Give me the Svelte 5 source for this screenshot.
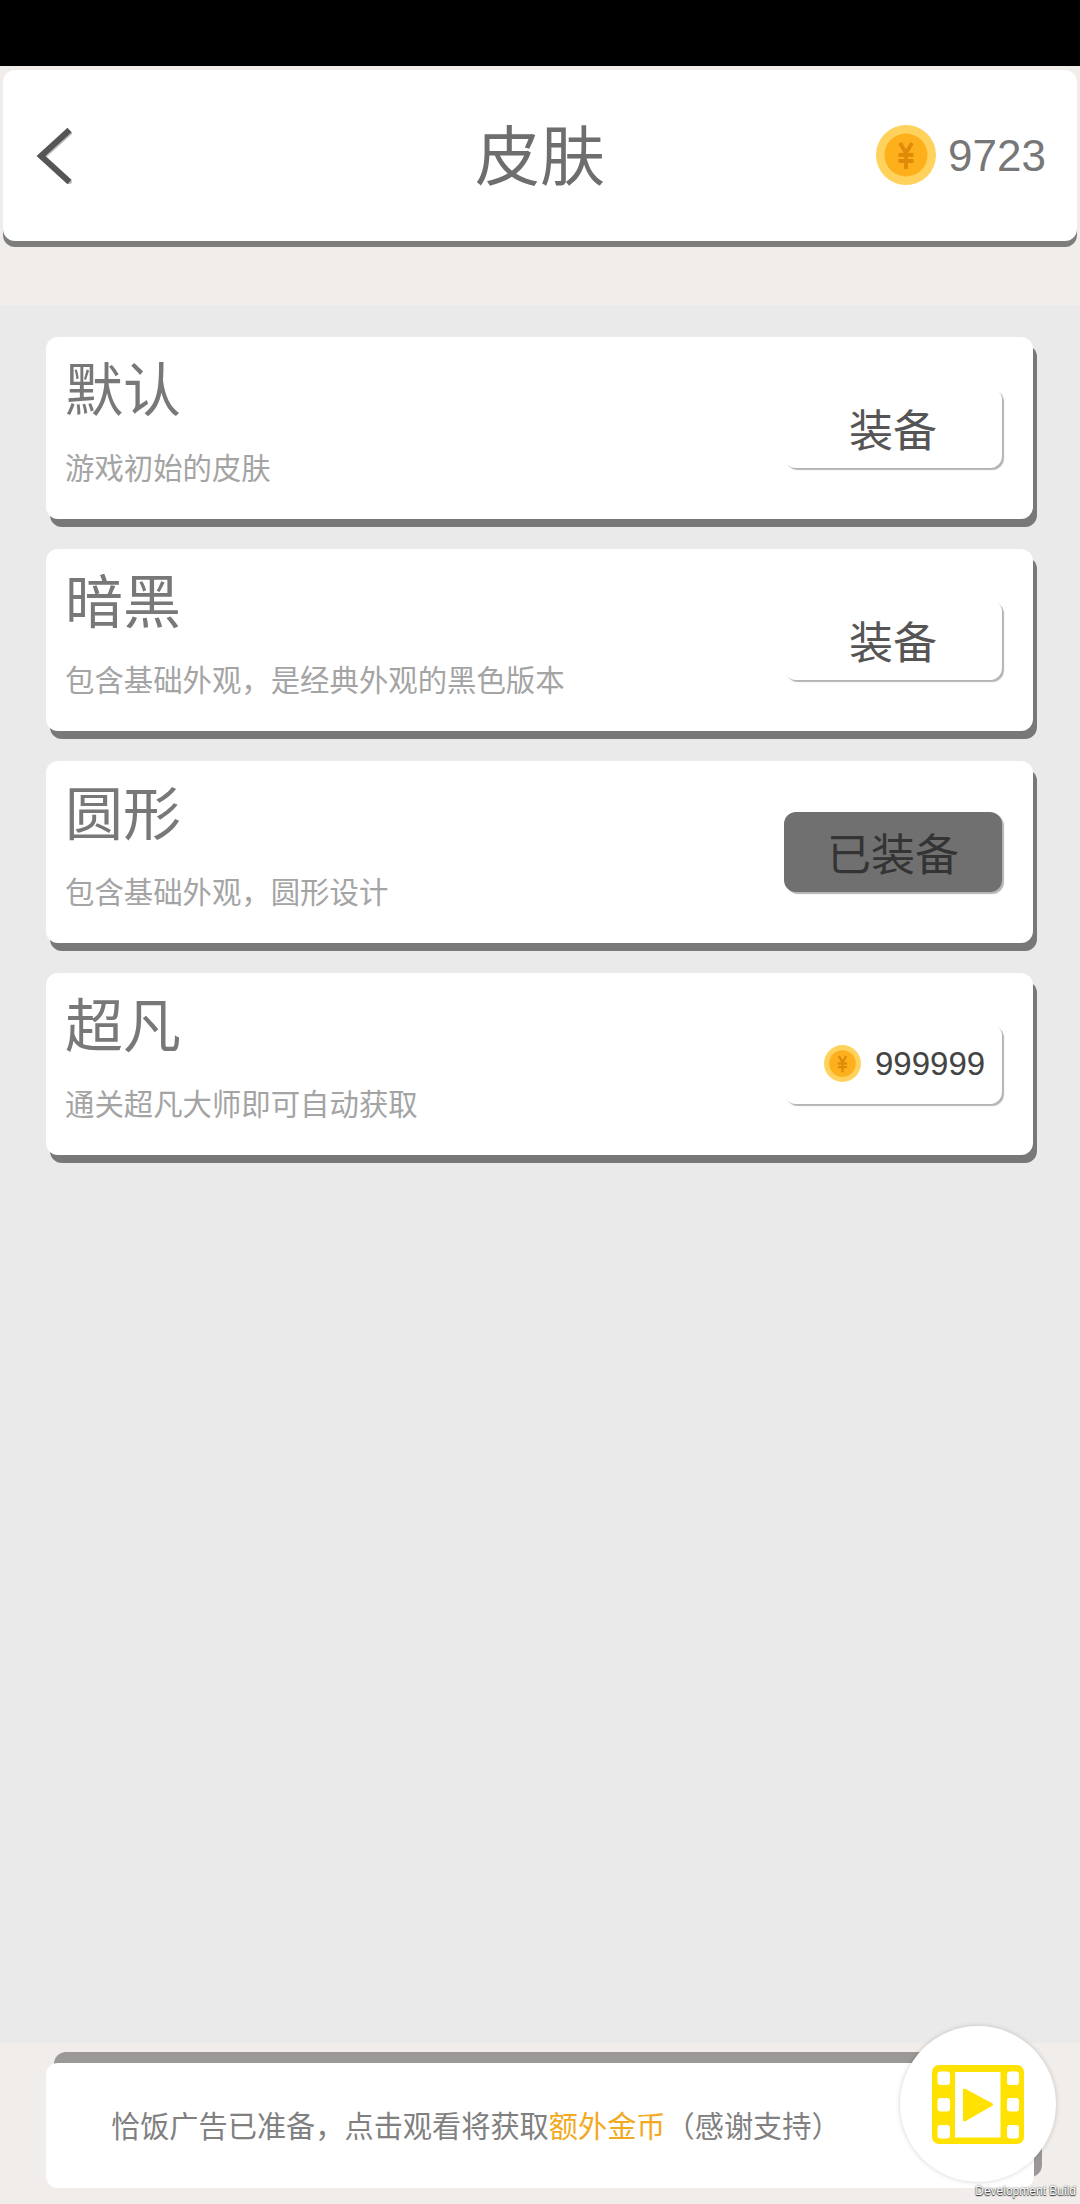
<script>
  const skins = [
    { name: '默认', desc: '游戏初始的皮肤', state: 'equip' },
    { name: '暗黑', desc: '包含基础外观，是经典外观的黑色版本', state: 'equip' },
    { name: '圆形', desc: '包含基础外观，圆形设计', state: 'equipped' },
    { name: '超凡', desc: '通关超凡大师即可自动获取', state: 'price' }
  ];
</script>

{#snippet coin(cls)}
  <svg class={cls} viewBox="0 0 60 60" aria-hidden="true">
    <circle cx="30" cy="30" r="30" fill="#fed25c" />
    <path d="M30 0a30 30 0 0 1 0 60a30 30 0 0 0 0-60z" fill="#fec63c" />
    <circle cx="30" cy="30" r="21.500" fill="#fdb01c" />
    <path d="M24 18l6 10l6-10M22.500 30h15M22.500 36h15M30 28v16" fill="none" stroke="#e08a0a" stroke-width="3.800" />
  </svg>
{/snippet}

<div class="page">
  <div class="status"></div>

  <div class="top">
    <header class="header">
      <svg class="back" viewBox="0 0 36 56" aria-hidden="true">
        <path d="M33.500 2L5 28l28.500 26" fill="none" stroke="#bdbdbd" stroke-width="5" transform="translate(1.500 1.500)" />
        <path d="M33.500 2L5 28l28.500 26" fill="none" stroke="#555" stroke-width="6" />
      </svg>
      <h1>皮肤</h1>
      <div class="balance">
        {@render coin('coin-lg')}
        <span>9723</span>
      </div>
    </header>
  </div>

  <main class="list">
    {#each skins as skin}
      <article class="card">
        <div class="info">
          <h2>{skin.name}</h2>
          <p>{skin.desc}</p>
        </div>
        {#if skin.state === 'equip'}
          <button class="btn">装备</button>
        {:else if skin.state === 'equipped'}
          <button class="btn on">已装备</button>
        {:else}
          <button class="btn price">
            {@render coin('coin-sm')}
            <span>999999</span>
          </button>
        {/if}
      </article>
    {/each}
  </main>

  <footer class="footer">
    <div class="ad">
      <p>恰饭广告已准备，点击观看将获取<em>额外金币</em>（感谢支持）</p>
      <div class="play">
        <svg viewBox="0 0 92 79" aria-hidden="true">
          <rect width="92" height="79" rx="7" fill="#ffe200" />
          <rect x="23" y="7" width="45.500" height="65.500" fill="#fff" />
          <rect x="5.500" y="6.500" width="12.500" height="13.500" rx="3" fill="#fff" />
          <rect x="5.500" y="33" width="12.500" height="13.500" rx="3" fill="#fff" />
          <rect x="5.500" y="60" width="12.500" height="13.500" rx="3" fill="#fff" />
          <rect x="75" y="6.500" width="12" height="13.500" rx="3" fill="#fff" />
          <rect x="75" y="33" width="12" height="13.500" rx="3" fill="#fff" />
          <rect x="75" y="60" width="12" height="13.500" rx="3" fill="#fff" />
          <path d="M32.500 25L59.500 39.500L32.500 55z" fill="#ffe200" stroke="#ffe200" stroke-width="3" stroke-linejoin="round" />
        </svg>
      </div>
    </div>
    <span class="devbuild">Development Build</span>
  </footer>
</div>

<style>
  :global(body) {
    margin: 0;
  }

  .page {
    width: 1080px;
    height: 2204px;
    display: flex;
    flex-direction: column;
    position: relative;
    overflow: hidden;
    background: #eaeaea;
    font-family: "Noto Sans CJK SC", "Liberation Sans", sans-serif;
  }

  .status {
    height: 66px;
    background: #000;
  }

  .top {
    height: 239px;
    padding: 4px 3px 0;
    box-sizing: border-box;
    background: #f0edea;
  }

  .header {
    height: 171px;
    display: grid;
    grid-template-columns: 1fr auto 1fr;
    align-items: center;
    padding: 0 32px;
    background: #fff;
    border-radius: 12px;
    box-shadow: 0 6px 0 #7f7c7c;
  }

  .back {
    width: 36px;
    height: 56px;
    margin: 0 0 0 1px;
  }

  h1 {
    margin: 0 0 8px;
    font-size: 65px;
    line-height: 80px;
    font-weight: 400;
    color: #6e6e6e;
  }

  .balance {
    justify-self: end;
    display: flex;
    align-items: center;
    gap: 12px;
    margin-right: -1px;
    color: #777;
    font-family: "Liberation Sans", sans-serif;
    font-size: 44px;
  }

  .coin-lg {
    width: 60px;
    height: 60px;
    margin-bottom: 1px;
  }

  .coin-sm {
    width: 37px;
    height: 37px;
    flex: none;
  }

  .list {
    flex: 1;
    display: flex;
    flex-direction: column;
    gap: 30px;
    padding: 32px 47px 0 46px;
  }

  .card {
    height: 182px;
    box-sizing: border-box;
    display: flex;
    justify-content: space-between;
    align-items: center;
    padding: 0 31px 0 19px;
    background: #fff;
    border-radius: 12px;
    box-shadow: 4px 8px 0 #787878;
  }

  .info {
    align-self: flex-start;
    padding-top: 14px;
  }

  h2 {
    margin: 0;
    font-size: 58px;
    line-height: 70px;
    font-weight: 400;
    color: #787878;
  }

  .info p {
    margin: 25px 0 0;
    font-size: 29.400px;
    line-height: 40px;
    color: #a4a4a4;
  }

  .btn {
    width: 218px;
    height: 80px;
    margin-top: -1px;
    padding: 0;
    display: flex;
    align-items: center;
    justify-content: center;
    border: 0;
    border-radius: 12px;
    background: #fff;
    box-shadow: 2px 2px 1px #b4b4b4;
    font-family: inherit;
    font-size: 44px;
    color: #555;
  }

  .btn.on {
    background: #707070;
    color: #343434;
  }

  .btn.price {
    justify-content: flex-start;
    gap: 14px;
    padding: 0 0 0 40px;
    box-sizing: border-box;
    font-family: "Liberation Sans", sans-serif;
    font-size: 33px;
    color: #444;
  }

  .footer {
    height: 161px;
    box-sizing: border-box;
    padding: 20px 46px 0;
    background: #f0edea;
    position: relative;
  }

  .ad {
    height: 125px;
    display: flex;
    align-items: center;
    padding-left: 65px;
    background: #fff;
    border-radius: 12px;
    box-shadow: 8px -11px 0 #9b9897;
    position: relative;
  }

  .ad p {
    margin: 0 0 4px;
    font-size: 29.200px;
    line-height: 40px;
    color: #808080;
  }

  .ad em {
    font-style: normal;
    color: #f2a922;
  }

  .play {
    position: absolute;
    left: 854px;
    top: -37px;
    width: 156px;
    height: 156px;
    display: flex;
    align-items: center;
    justify-content: center;
    border-radius: 50%;
    background: #fff;
    box-shadow: 0 0 5px rgba(0, 0, 0, 0.18);
  }

  .play svg {
    width: 92px;
    height: 79px;
  }

  .devbuild {
    position: absolute;
    right: 4px;
    bottom: 6px;
    font-family: "Liberation Sans", sans-serif;
    font-size: 12px;
    line-height: 14px;
    color: #fff;
    text-shadow: 0 0 2px #333, 0 1px 1px #333;
  }
</style>
